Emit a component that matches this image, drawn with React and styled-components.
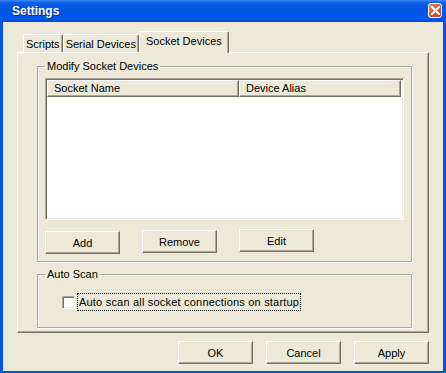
import React from 'react';
import styled, { createGlobalStyle } from 'styled-components';

const GlobalStyle = createGlobalStyle`
  html, body {
    margin: 0;
    padding: 0;
    background: #ece9d8;
  }
  body {
    font-family: "Liberation Sans", Arial, sans-serif;
    font-size: 11px;
    color: #000;
  }
`;

const App = () => {
  return (
    <>
      <GlobalStyle />
      <Window>
        <TitleBar>
          <Title>Settings</Title>
          <CloseButton>
            <svg width="9" height="9" viewBox="0 0 9 9">
              <path d="M1 1 L8 8 M8 1 L1 8" stroke="#fff" strokeWidth="2" strokeLinecap="square" />
            </svg>
          </CloseButton>
        </TitleBar>
        <Frame>
          <Tabs>
            <Tab>Scripts</Tab>
            <Tab>Serial Devices</Tab>
            <Tab $active>Socket Devices</Tab>
          </Tabs>
          <Panel>
            <Group>
              <Legend>Modify Socket Devices</Legend>
              <ListView>
                <ListHeader>
                  <HeaderCell $width={192}>Socket Name</HeaderCell>
                  <HeaderCell>Device Alias</HeaderCell>
                </ListHeader>
              </ListView>
              <ActionRow>
                <Button $shift={1}>Add</Button>
                <Button>Remove</Button>
                <Button $shift={-1}>Edit</Button>
              </ActionRow>
            </Group>
            <Group $gap={6}>
              <Legend>Auto Scan</Legend>
              <CheckRow>
                <CheckBox />
                <CheckLabel>Auto scan all socket connections on startup</CheckLabel>
              </CheckRow>
            </Group>
          </Panel>
          <DialogButtons>
            <Button>OK</Button>
            <Button>Cancel</Button>
            <Button>Apply</Button>
          </DialogButtons>
        </Frame>
      </Window>
    </>
  );
};

const Window = styled.div`
  width: 446px;
  height: 373px;
  display: flex;
  flex-direction: column;
  box-sizing: border-box;
`;

const TitleBar = styled.div`
  height: 22px;
  flex-shrink: 0;
  display: flex;
  align-items: center;
  justify-content: space-between;
  padding: 0 4px 0 12px;
  background: linear-gradient(#3f8cf3 0%, #0a5ee8 12%, #0054e3 45%, #0058ee 85%, #004ad9 100%);
`;

const Title = styled.span`
  color: #fff;
  font-weight: bold;
  font-size: 12px;
  text-shadow: 1px 1px #0a2a8c;
`;

const CloseButton = styled.div`
  width: 14px;
  height: 15px;
  box-sizing: border-box;
  margin-bottom: 1px;
  border: 1px solid #fff;
  border-radius: 3px;
  background: linear-gradient(135deg, #e88a6c 0%, #d4552f 55%, #c23d1b 100%);
  display: flex;
  align-items: center;
  justify-content: center;
`;

const Frame = styled.div`
  flex: 1;
  display: flex;
  flex-direction: column;
  box-sizing: border-box;
  background: #ece9d8;
  border: 3px solid #0055e5;
  border-top: none;
  padding: 9px 14px 7px;
`;

const Tabs = styled.div`
  display: flex;
  align-items: flex-end;
  height: 21px;
  padding-left: 6px;
`;

const Tab = styled.div`
  box-sizing: border-box;
  height: ${p => (p.$active ? 22 : 18)}px;
  margin-bottom: ${p => (p.$active ? -1 : 0)}px;
  padding: ${p => (p.$active ? '3px 6px 0' : '3px 2px 0')};
  line-height: 13px;
  background: #ece9d8;
  border: 1px solid;
  border-bottom: none;
  border-color: #fff #716f64 transparent #fff;
  border-radius: 2px 2px 0 0;
  box-shadow: inset -1px 0 #aca899;
  position: relative;
  z-index: ${p => (p.$active ? 1 : 0)};
  white-space: nowrap;
`;

const Panel = styled.div`
  box-sizing: border-box;
  height: 281px;
  border: 1px solid;
  border-color: #fff #716f64 #716f64 #fff;
  box-shadow: inset -1px -1px #aca899;
  padding: 7px 16px 0 19px;
`;

const Group = styled.fieldset`
  margin: ${p => p.$gap || 0}px 0 0;
  padding: 5px 7px 8px;
  min-width: 0;
  border: 1px solid #aca899;
  box-shadow: inset 1px 1px #fff, 1px 1px #fff;
`;

const Legend = styled.legend`
  padding: 0 2px;
  line-height: 13px;
  background: #ece9d8;
`;

const ListView = styled.div`
  box-sizing: border-box;
  height: 142px;
  background: #fff;
  border: 1px solid;
  border-color: #aca899 #fff #fff #aca899;
  box-shadow: inset 1px 1px #716f64, inset -1px -1px #f1efe2;
  padding: 1px 2px 0 1px;
`;

const ListHeader = styled.div`
  display: flex;
  height: 17px;
`;

const HeaderCell = styled.div`
  box-sizing: border-box;
  ${p => (p.$width ? `width: ${p.$width}px;` : 'flex: 1;')}
  height: 17px;
  line-height: 14px;
  padding-left: 6px;
  background: #ece9d8;
  border: 1px solid;
  border-color: #fff #716f64 #716f64 #fff;
  box-shadow: inset -1px -1px #aca899;
`;

const ActionRow = styled.div`
  display: flex;
  align-items: flex-start;
  gap: 22px;
  margin-top: 10px;
  height: 23px;
`;

const Button = styled.div`
  box-sizing: border-box;
  width: 75px;
  height: 23px;
  margin-top: ${p => p.$shift || 0}px;
  display: flex;
  align-items: center;
  justify-content: center;
  background: #ece9d8;
  border: 1px solid;
  border-color: #fff #716f64 #716f64 #fff;
  box-shadow: inset -1px -1px #aca899;
`;

const CheckRow = styled.div`
  display: flex;
  align-items: center;
  margin: 7px 0 8px 17px;
  height: 18px;
`;

const CheckBox = styled.div`
  box-sizing: border-box;
  width: 13px;
  height: 13px;
  background: #fff;
  border: 1px solid;
  border-color: #aca899 #fff #fff #aca899;
  box-shadow: inset 1px 1px #716f64, inset -1px -1px #f1efe2;
`;

const CheckLabel = styled.span`
  margin-left: 2px;
  padding: 0 1px;
  line-height: 16px;
  letter-spacing: 0.2px;
  border: 1px dotted #000;
  white-space: nowrap;
`;

const DialogButtons = styled.div`
  display: flex;
  justify-content: flex-end;
  gap: 13px;
  margin-top: 8px;
`;

export default App;
